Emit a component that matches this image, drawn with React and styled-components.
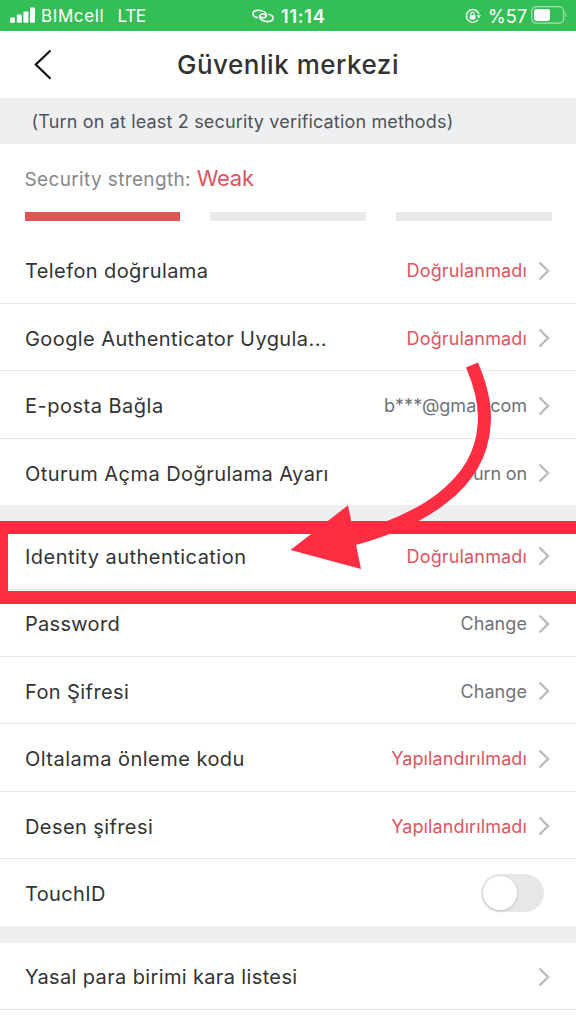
import React from "react";
import styled, { createGlobalStyle } from "styled-components";

const colors = {
  green: "#34bf56",
  red: "#dd5560",
  text: "#333333",
  muted: "#6e7378",
  gap: "#eeeff1",
  marker: "#ff2d42",
};

const securityRows = [
  { label: "Telefon doğrulama", value: "Doğrulanmadı", danger: true },
  { label: "Google Authenticator Uygula...", value: "Doğrulanmadı", danger: true },
  { label: "E-posta Bağla", value: "b***@gmail.com", spacing: 0, tracking: 0.5 },
  { label: "Oturum Açma Doğrulama Ayarı", value: "Turn on", spacing: -0.15, tracking: 0.45 },
];

const accountRows = [
  { label: "Identity authentication", value: "Doğrulanmadı", danger: true, tracking: 0.47 },
  { label: "Password", value: "Change", spacing: 0.08, tracking: 0.3 },
  { label: "Fon Şifresi", value: "Change", spacing: 0.08 },
  { label: "Oltalama önleme kodu", value: "Yapılandırılmadı", danger: true, spacing: 0.12, tracking: 0.47 },
  { label: "Desen şifresi", value: "Yapılandırılmadı", danger: true, spacing: 0.12 },
  { label: "TouchID", toggle: true, tracking: 0.35 },
];

const Chevron = () => (
  <ChevronIcon viewBox="0 0 12 20">
    <path d="M1.5 1.5 L10 10 L1.5 18.5" />
  </ChevronIcon>
);

const SettingRow = ({ label, value, danger, spacing, tracking, toggle }) => (
  <Row>
    <Label $tracking={tracking}>{label}</Label>
    {toggle ? (
      <Toggle role="switch" aria-checked="false">
        <Knob />
      </Toggle>
    ) : (
      <>
        {value && <Value $danger={danger} $spacing={spacing}>{value}</Value>}
        <Chevron />
      </>
    )}
  </Row>
);

const StatusBar = () => (
  <StatusBarComponent>
    <Carrier>
      <svg width="26" height="16" viewBox="0 0 26 16" fill="white">
        <rect x="0" y="10.4" width="5" height="5.3" rx="1" />
        <rect x="6.8" y="7.6" width="5" height="8.1" rx="1" />
        <rect x="13.4" y="4.4" width="5" height="11.3" rx="1" />
        <rect x="20" y="0.4" width="5" height="15.3" rx="1" />
      </svg>
      <StatusText className="name">BIMcell</StatusText>
      <StatusText $spacing={-0.3}>LTE</StatusText>
    </Carrier>
    <Clock>
      <svg width="22" height="14" viewBox="0 0 22 14" fill="none" stroke="white" strokeWidth="1.6" strokeLinecap="round">
        <path d="M5.2 8.6 C2.6 8 1 6.5 1 4.8 C1 2.5 3.4 1.2 6.4 1.2 C10.4 1.2 14.4 3.4 14.4 6.2 C14.4 8.2 12.4 9.2 10.4 8.8 C9.2 8.5 8.3 7.9 8.2 7.2" />
        <path d="M16.8 5.2 C19.4 5.8 21 7.3 21 9 C21 11.3 18.6 12.6 15.6 12.6 C11.6 12.6 7.6 10.4 7.6 7.6 C7.6 5.6 9.6 4.6 11.6 5 C12.8 5.3 13.7 5.9 13.8 6.6" />
      </svg>
      <StatusText $bold $spacing={0.8}>11:14</StatusText>
    </Clock>
    <Power>
      <svg width="16" height="16" viewBox="0 0 16 16">
        <path d="M12.9 11.8 A6.4 6.4 0 1 1 13.9 6" fill="none" stroke="white" strokeWidth="1.4" />
        <path d="M11.6 7.2 H16 L13.8 10.4 Z" fill="white" />
        <rect x="4.6" y="7" width="5.8" height="4.4" rx="0.8" fill="white" />
        <path d="M5.8 7 V5.9 A1.7 1.7 0 0 1 9.2 5.9 V7" fill="none" stroke="white" strokeWidth="1.1" />
      </svg>
      <StatusText className="percent" $size={18} $spacing={0.2}>%57</StatusText>
      <svg width="37" height="18" viewBox="0 0 37 18">
        <rect x="0.7" y="0.7" width="32" height="16.4" rx="4.6" fill="none" stroke="#a4e2b2" strokeWidth="1.2" />
        <rect x="3" y="3" width="16" height="12" rx="2.4" fill="white" />
        <path d="M34.6 6 Q36.6 8.9 34.6 11.8 Z" fill="#a4e2b2" />
      </svg>
    </Power>
  </StatusBarComponent>
);

const Annotation = () => (
  <AnnotationLayer viewBox="0 0 576 1024">
    <path d="M0 521 H576 V534 H8 V591 H576 V604 H0 Z" fill={colors.marker} />
    <path
      d="M472 365 C481 386 486 408 484 426 C480 484 424 521 346 541"
      fill="none"
      stroke={colors.marker}
      strokeWidth="13"
    />
    <path d="M290.5 550 L348 505.3 L361 569 Z" fill={colors.marker} />
  </AnnotationLayer>
);

const App = () => {
  return (
    <>
      <GlobalStyle />
      <Screen>
        <StatusBar />
        <Header>
          <BackIcon viewBox="0 0 18 31">
            <path d="M16.5 1.5 L1.8 15.5 L16.5 29.8" />
          </BackIcon>
          <Title>Güvenlik merkezi</Title>
        </Header>
        <Notice>(Turn on at least 2 security verification methods)</Notice>
        <Strength>
          <div className="caption">
            Security strength: <span>Weak</span>
          </div>
          <Meter>
            <Bar $active />
            <Bar />
            <Bar />
          </Meter>
        </Strength>
        <Group>
          {securityRows.map((row) => <SettingRow key={row.label} {...row} />)}
        </Group>
        <Group>
          {accountRows.map((row) => <SettingRow key={row.label} {...row} />)}
        </Group>
        <Group $last>
          <SettingRow label="Yasal para birimi kara listesi" tracking={0.36} />
        </Group>
        <Annotation />
      </Screen>
    </>
  );
};

const GlobalStyle = createGlobalStyle`
  * {
    box-sizing: border-box;
  }

  body {
    margin: 0;
    background: white;
    font-family: Inter, "Liberation Sans", sans-serif;
  }
`;

const Screen = styled.main`
  position: relative;
  width: 576px;
  height: 1024px;
  overflow: hidden;
  background: white;
`;

const StatusBarComponent = styled.div`
  display: grid;
  grid-template-columns: 252px 213px 1fr;
  align-items: center;
  height: 31px;
  padding-top: 1px;
  background: ${colors.green};

  svg {
    flex: none;
  }
`;

const Carrier = styled.div`
  display: flex;
  align-items: center;
  padding-left: 10px;

  svg {
    margin-top: -2px;
  }

  .name {
    width: 76.5px;
    margin-left: 5px;
  }
`;

const Clock = styled.div`
  display: flex;
  align-items: center;
  gap: 7px;
`;

const Power = styled.div`
  display: flex;
  align-items: center;

  .percent {
    width: 43px;
    margin-left: 7px;
  }

  svg:last-child {
    margin-top: -2px;
  }
`;

const StatusText = styled.span`
  color: white;
  font-size: ${({ $bold, $size }) => $size || ($bold ? 18 : 17)}px;
  font-weight: ${({ $bold }) => ($bold ? 600 : 400)};
  letter-spacing: ${({ $spacing = 0.6 }) => $spacing}px;
  white-space: nowrap;
`;

const Header = styled.header`
  display: grid;
  grid-template-columns: 34px 1fr 34px;
  align-items: center;
  height: 67px;
`;

const BackIcon = styled.svg`
  width: 18px;
  height: 31px;
  margin-left: 34px;
  fill: none;
  stroke: #111111;
  stroke-width: 2.2;
`;

const Title = styled.h1`
  margin: 0;
  color: ${colors.text};
  font-size: 26px;
  font-weight: 500;
  letter-spacing: 0.52px;
  text-align: center;
`;

const Notice = styled.div`
  height: 46px;
  padding-left: 31.5px;
  background: ${colors.gap};
  color: #4e5359;
  font-size: 18px;
  letter-spacing: 0.16px;
  line-height: 47px;
`;

const Strength = styled.section`
  height: 92.7px;
  padding: 16px 24.5px 0;

  .caption {
    height: 36px;
    color: #85888c;
    font-size: 19px;
    letter-spacing: 0.36px;
    line-height: 36px;
    white-space: nowrap;
  }

  span {
    color: ${colors.red};
    font-size: 22px;
    letter-spacing: -0.2px;
  }
`;

const Meter = styled.div`
  display: grid;
  grid-template-columns: repeat(3, 1fr);
  gap: 30px;
  margin-top: 16px;
`;

const Bar = styled.div`
  height: 9px;
  background: ${({ $active }) => ($active ? "#de5555" : "#e9e9e9")};
`;

const Row = styled.div`
  display: flex;
  align-items: center;
  height: 67.4px;
  padding: 2px 26px 0 25px;
  border-bottom: 1px solid #e9e9eb;
`;

const Group = styled.section`
  border-bottom: ${({ $last }) => ($last ? "1px solid #e9e9eb" : `17px solid ${colors.gap}`)};

  ${Row}:last-child {
    height: 66.4px;
    border-bottom: 0;
  }
`;

const Label = styled.span`
  flex: 1;
  padding-top: 1px;
  color: ${colors.text};
  font-size: 20px;
  letter-spacing: ${({ $tracking = 0.41 }) => $tracking}px;
  line-height: 28px;
  white-space: nowrap;
`;

const Value = styled.span`
  padding-top: 1px;
  color: ${({ $danger }) => ($danger ? colors.red : colors.muted)};
  font-size: 18px;
  letter-spacing: ${({ $spacing = 0.15 }) => $spacing}px;
  line-height: 28px;
  white-space: nowrap;
`;

const ChevronIcon = styled.svg`
  flex: none;
  width: 12px;
  height: 20px;
  margin-left: 11px;
  fill: none;
  stroke: #bcbcbe;
  stroke-width: 2.4;
`;

const Toggle = styled.div`
  display: flex;
  align-items: center;
  width: 62.5px;
  height: 38px;
  margin-right: 6.5px;
  padding: 2px;
  border-radius: 19px;
  background: #e7e7e9;
`;

const Knob = styled.div`
  width: 34px;
  height: 34px;
  border-radius: 50%;
  background: white;
  box-shadow: 0 1px 3px rgba(0, 0, 0, 0.18);
`;

const AnnotationLayer = styled.svg`
  position: absolute;
  inset: 0;
  width: 576px;
  height: 1024px;
  pointer-events: none;
`;

export default App;
